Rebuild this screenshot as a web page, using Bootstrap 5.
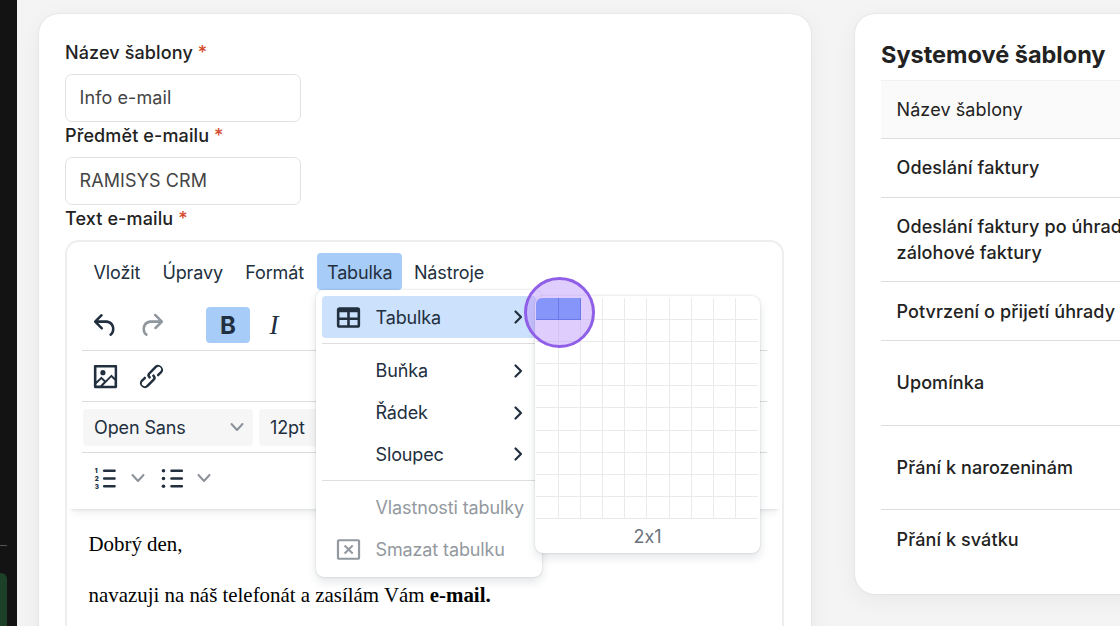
<!DOCTYPE html>
<html lang="cs">
<head>
    <meta charset="UTF-8">
    <meta name="viewport" content="width=device-width, initial-scale=1.0">
    <title>Šablony e-mailů - RAMISYS CRM</title>
    <link href="https://cdn.jsdelivr.net/npm/bootstrap@5.3.0/dist/css/bootstrap.min.css" rel="stylesheet">
    <style>
        body {
            font-family: Inter, "Liberation Sans", sans-serif;
            font-size: 18px;
            line-height: 27px;
            color: #222;
            background-color: #f4f4f4;
        }
        .page { height: 626px; }
        .sidebar { width: 17px; background-color: #131313; padding-top: 545px; }
        .sidebar-line { width: 7px; height: 1px; background-color: #555; }
        .sidebar-btn { width: 7px; height: 70px; margin-top: 27px; background-color: #1c4128; border-radius: 0 6px 6px 0; }
        .content { padding: 14px 0 0 22px; gap: 44px; }
        .panel {
            background-color: #fff;
            border-radius: 20px;
            padding: 25px 26px 26px;
            box-shadow: 0 0 2px rgba(0,0,0,.12), 0 6px 24px rgba(0,0,0,.05);
        }
        .panel-form { width: 772px; height: 700px; }
        .panel-list { width: 480px; height: 580px; }

        /* formulář */
        .form-label { font-weight: 500; margin-bottom: 8px; display: block; letter-spacing: .12px; }
        .form-label span { color: #d4492a; }
        .form-control {
            width: 236px;
            height: 48px;
            padding: 0 13.5px 1px;
            font-size: 18px;
            letter-spacing: .1px;
            color: #444;
            border: 1px solid #e2e2e2;
            border-radius: 7px;
        }

        /* editor */
        .editor {
            width: 719px;
            height: 500px;
            border: 2px solid #eee;
            border-radius: 14px;
            color: #222f3e;
            font-size: 18px;
            letter-spacing: -.12px;
        }
        .editor-head {
            height: 267px;
            padding: 11px 13px 0;
            margin: 0 2px;
            border-radius: 12px 12px 0 0;
            box-shadow: 0 3px 3px -2px rgba(34,47,62,.1), 0 8px 9px -4px rgba(34,47,62,.07);
        }
        .menu-bar { gap: .8px; padding-left: .8px; margin-bottom: 10px; }
        .menu-btn { height: 37px; border-radius: 4px; padding: 1px 10.7px 0; white-space: nowrap; }
        .menu-btn.on { margin-left: 1.6px; padding: 1px 9.9px 0; }
        .menu-btn.on, .tool.on { background-color: #a6ccf7; }
        .tool-row { height: 51px; border-bottom: 1px solid #dcdcdc; padding-left: 1px; }
        .tool { width: 44px; height: 36px; border-radius: 4px; margin-right: 2px; }
        .tool-b { font-size: 24px; font-weight: 700; margin-left: 31px; }
        .tool-i { font: italic 27px "Liberation Serif", serif; }
        .select-box { height: 37px; padding: 0 8px 0 11px; background-color: #f6f6f6; border-radius: 4px; }
        .select-font { width: 170px; }
        .select-size { width: 120px; margin-left: 6px; }
        .ico { width: 31px; height: 31px; fill: currentColor; flex: none; }
        .chev { width: 16px; height: 16px; fill: none; stroke: #8b9198; stroke-width: 2; stroke-linecap: round; stroke-linejoin: round; flex: none; }
        .list-tools .chev { margin-left: 2.5px; margin-top: -1px; }
        .list-tools .ico { margin-top: -1px; }
        .editor-text {
            font-family: "Liberation Serif", serif;
            font-size: 20.9px;
            letter-spacing: 0;
            line-height: 29px;
            color: #000;
            padding: 21px 21.5px 0;
        }
        .editor-text p { margin-bottom: 22px; white-space: nowrap; }

        /* rozbalené menu */
        .table-menu {
            top: 37px;
            left: 1px;
            width: 226px;
            height: 287px;
            padding: 6px;
            border: 0;
            border-radius: 8px;
            background-color: #fff;
            box-shadow: 0 0 2px rgba(34,47,62,.22), 0 5px 10px rgba(34,47,62,.12);
            z-index: 10;
        }
        .menu-row { height: 41.7px; padding: 0 8px 0 11px; border-radius: 4px; white-space: nowrap; }
        .menu-row.on { background-color: #cce1fb; height: 42px; }
        .menu-row.off { color: #9399a0; }
        .menu-row .ico, .menu-gap { width: 31px; margin-right: 11px; }
        .menu-row .chev { stroke: #222f3e; stroke-width: 2.2; margin-left: auto; margin-right: 2px; }
        .menu-line { height: 1px; background-color: #dedede; margin: 5px 0 6px; }
        .size-menu {
            top: 6px;
            left: 218.5px;
            width: 225px;
            height: 257px;
            padding: 2px 1.5px 0;
            border-radius: 8px;
            background-color: #fff;
            box-shadow: 0 0 2px rgba(34,47,62,.22), 0 5px 10px rgba(34,47,62,.12);
        }
        .size-grid { display: grid; grid-template-columns: repeat(10, 1fr); grid-auto-rows: 22.1px; overflow: hidden; border-radius: 6px 6px 0 0; }
        .size-grid i { border: solid #eaeaea; border-width: 0 1px 1px 0; }
        .size-grid i:nth-child(10n) { border-right: 0; }
        .size-grid i.on { background-color: #5c98f7; border-color: #2a62d6; }
        .size-label { height: 35px; color: #6a727b; font-feature-settings: "calt" 0; }
        .click-ring {
            top: -19px;
            left: -11px;
            width: 71px;
            height: 71px;
            border: 3px solid #8f5fe8;
            border-radius: 50%;
            background-color: rgba(185,145,250,.46);
        }

        /* seznam šablon */
        .panel-list h2 { font-size: 23.5px; font-weight: 700; line-height: 31px; margin: 0 0 10px; white-space: nowrap; }
        .tpl-row { height: 58.5px; padding: 1px 0 0 15.5px; border-bottom: 1px solid #dedede; font-weight: 500; line-height: 26px; letter-spacing: .1px; white-space: nowrap; }
        .tpl-head { height: 59px; background-color: #fafafa; border-top: 1px solid #f2f2f2; font-weight: 400; }
        .tpl-tall { height: 84.8px; }
        .tpl-row:last-child { border-bottom: 0; }
    </style>
</head>
<body class="overflow-hidden">
    <div class="page d-flex overflow-hidden">
        <div class="sidebar flex-shrink-0">
            <div class="sidebar-line"></div>
            <div class="sidebar-btn"></div>
        </div>

        <div class="content d-flex align-items-start">
            <div class="panel panel-form flex-shrink-0">
                <label class="form-label" for="nazev">Název šablony <span>*</span></label>
                <input type="text" class="form-control" id="nazev" value="Info e-mail">
                <label class="form-label" for="predmet">Předmět e-mailu <span>*</span></label>
                <input type="text" class="form-control" id="predmet" value="RAMISYS CRM">
                <label class="form-label">Text e-mailu <span>*</span></label>

                <div class="editor">
                    <div class="editor-head">
                        <div class="d-flex menu-bar">
                            <div class="menu-btn d-flex align-items-center">Vložit</div>
                            <div class="menu-btn d-flex align-items-center">Úpravy</div>
                            <div class="menu-btn d-flex align-items-center">Formát</div>
                            <div class="position-relative">
                                <div class="menu-btn on d-flex align-items-center">Tabulka</div>
                                <div class="table-menu position-absolute">
                                    <div class="menu-row on d-flex align-items-center">
                                        <svg class="ico" viewBox="0 0 24 24"><path d="M19 4a2 2 0 0 1 2 2v12a2 2 0 0 1-2 2H5a2 2 0 0 1-2-2V6c0-1.1.9-2 2-2h14ZM5 14v4h6v-4H5Zm14 0h-6v4h6v-4Zm0-6h-6v4h6V8ZM5 12h6V8H5v4Z"/></svg>
                                        Tabulka
                                        <svg class="chev" viewBox="0 0 16 16"><path d="M5.5 2.5 11 8l-5.5 5.5"/></svg>
                                    </div>
                                    <div class="menu-line"></div>
                                    <div class="menu-row d-flex align-items-center">
                                        <span class="menu-gap"></span>Buňka
                                        <svg class="chev" viewBox="0 0 16 16"><path d="M5.5 2.5 11 8l-5.5 5.5"/></svg>
                                    </div>
                                    <div class="menu-row d-flex align-items-center">
                                        <span class="menu-gap"></span>Řádek
                                        <svg class="chev" viewBox="0 0 16 16"><path d="M5.5 2.5 11 8l-5.5 5.5"/></svg>
                                    </div>
                                    <div class="menu-row d-flex align-items-center">
                                        <span class="menu-gap"></span>Sloupec
                                        <svg class="chev" viewBox="0 0 16 16"><path d="M5.5 2.5 11 8l-5.5 5.5"/></svg>
                                    </div>
                                    <div class="menu-line"></div>
                                    <div class="menu-row off d-flex align-items-center"><span class="menu-gap"></span>Vlastnosti tabulky</div>
                                    <div class="menu-row off d-flex align-items-center">
                                        <svg class="ico" viewBox="0 0 24 24"><path d="M19.5 4c.8 0 1.5.7 1.5 1.5v13c0 .8-.7 1.5-1.5 1.5h-15c-.8 0-1.5-.7-1.5-1.5v-13C3 4.7 3.7 4 4.5 4h15ZM19.3 5.7H4.7v12.6h14.6V5.7Zm-4.6 2.6 1.1 1.1-2.6 2.6 2.6 2.6-1.1 1.1-2.6-2.6-2.6 2.6-1.1-1.1 2.6-2.6-2.6-2.6 1.1-1.1 2.6 2.6 2.6-2.6Z"/></svg>
                                        Smazat tabulku
                                    </div>

                                    <div class="size-menu position-absolute">
                                        <div class="size-grid" id="sizeGrid"></div>
                                        <div class="size-label d-flex align-items-center justify-content-center">2x1</div>
                                        <div class="click-ring position-absolute"></div>
                                    </div>
                                </div>
                            </div>
                            <div class="menu-btn d-flex align-items-center">Nástroje</div>
                        </div>

                        <div class="tool-row d-flex align-items-center">
                            <div class="tool d-flex align-items-center justify-content-center">
                                <svg class="ico" viewBox="0 0 24 24"><path d="M6.4 8H12c3.7 0 6.2 2 6.8 5.1.6 2.7-.4 5.6-2.3 6.8a1 1 0 0 1-1-1.8c1.1-.6 1.8-2.7 1.4-4.6-.5-2.1-2.1-3.5-4.9-3.5H6.4l3.3 3.3a1 1 0 1 1-1.4 1.4l-5-5a1 1 0 0 1 0-1.4l5-5a1 1 0 0 1 1.4 1.4L6.4 8Z"/></svg>
                            </div>
                            <div class="tool d-flex align-items-center justify-content-center opacity-50">
                                <svg class="ico" viewBox="0 0 24 24"><path d="M17.6 10H12c-2.8 0-4.4 1.4-4.9 3.5-.4 2 .3 4 1.4 4.6a1 1 0 1 1-1 1.8c-2-1.2-2.9-4.1-2.3-6.8.6-3 3-5.1 6.8-5.1h5.6l-3.3-3.3a1 1 0 1 1 1.4-1.4l5 5a1 1 0 0 1 0 1.4l-5 5a1 1 0 0 1-1.4-1.4l3.3-3.3Z"/></svg>
                            </div>
                            <div class="tool tool-b on d-flex align-items-center justify-content-center">B</div>
                            <div class="tool tool-i d-flex align-items-center justify-content-center">I</div>
                        </div>
                        <div class="tool-row d-flex align-items-center">
                            <div class="tool d-flex align-items-center justify-content-center">
                                <svg class="ico" viewBox="0 0 24 24"><path fill-rule="evenodd" d="m5 15.7 3.3-3.2c.3-.3.7-.3 1 0L12 15l4.1-4c.3-.4.8-.4 1 0l2 1.9V5H5v10.7ZM5 18V19h3l2.8-2.9-2-2L5 17.9Zm14-3-2.5-2.4-6.4 6.5H19v-4ZM4 3h16c.6 0 1 .4 1 1v16c0 .6-.4 1-1 1H4a1 1 0 0 1-1-1V4c0-.6.4-1 1-1Zm6 8a2 2 0 1 0 0-4 2 2 0 0 0 0 4Z"/></svg>
                            </div>
                            <div class="tool d-flex align-items-center justify-content-center">
                                <svg class="ico" viewBox="0 0 24 24"><path d="M6.2 12.3a1 1 0 0 1 1.4 1.4l-2 2a2 2 0 1 0 2.6 2.8l4.8-4.8a1 1 0 0 0 0-1.4 1 1 0 1 1 1.4-1.3 2.9 2.9 0 0 1 0 4L9.6 20a3.9 3.9 0 0 1-5.5-5.5l2-2Zm11.6-.6a1 1 0 0 1-1.4-1.4l2-2a2 2 0 1 0-2.6-2.8L11 10.3a1 1 0 0 0 0 1.4A1 1 0 1 1 9.6 13a2.9 2.9 0 0 1 0-4L14.4 4a3.9 3.9 0 0 1 5.5 5.5l-2 2Z"/></svg>
                            </div>
                        </div>
                        <div class="tool-row d-flex align-items-center">
                            <div class="select-box select-font d-flex align-items-center justify-content-between">
                                Open Sans
                                <svg class="chev" viewBox="0 0 16 16"><path d="m2.5 5 5.5 6 5.5-6"/></svg>
                            </div>
                            <div class="select-box select-size d-flex align-items-center">12pt</div>
                        </div>
                        <div class="tool-row border-0 d-flex align-items-center list-tools">
                            <div class="tool d-flex align-items-center justify-content-center me-0">
                                <svg class="ico" viewBox="0 0 24 24">
                                    <path d="M11 6h8M11 12h8M11 18h8" stroke="currentColor" stroke-width="2" stroke-linecap="round"/>
                                    <text x="3.6" y="7.8" font-size="4.8" font-weight="900">1</text>
                                    <text x="3.6" y="13.8" font-size="4.8" font-weight="900">2</text>
                                    <text x="3.6" y="19.8" font-size="4.8" font-weight="900">3</text>
                                </svg>
                            </div>
                            <svg class="chev" viewBox="0 0 16 16"><path d="m2.5 5 5.5 6 5.5-6"/></svg>
                            <div class="tool d-flex align-items-center justify-content-center me-0 ms-1">
                                <svg class="ico" viewBox="0 0 24 24">
                                    <path d="M12 6h8M12 12h8M12 18h8" stroke="currentColor" stroke-width="2" stroke-linecap="round"/>
                                    <circle cx="5.8" cy="6" r="1.4"/><circle cx="5.8" cy="12" r="1.4"/><circle cx="5.8" cy="18" r="1.4"/>
                                </svg>
                            </div>
                            <svg class="chev" viewBox="0 0 16 16"><path d="m2.5 5 5.5 6 5.5-6"/></svg>
                        </div>
                    </div>

                    <div class="editor-text">
                        <p>Dobrý den,</p>
                        <p>navazuji na náš telefonát a zasílám Vám <strong>e-mail.</strong></p>
                    </div>
                </div>
            </div>

            <div class="panel panel-list flex-shrink-0">
                <h2>Systemové šablony</h2>
                <div class="tpl-row tpl-head d-flex align-items-center">Název šablony</div>
                <div class="tpl-row d-flex align-items-center">Odeslání faktury</div>
                <div class="tpl-row tpl-tall d-flex align-items-center">Odeslání faktury po úhradě<br>zálohové faktury</div>
                <div class="tpl-row d-flex align-items-center">Potvrzení o přijetí úhrady</div>
                <div class="tpl-row tpl-tall d-flex align-items-center">Upomínka</div>
                <div class="tpl-row tpl-tall d-flex align-items-center">Přání k narozeninám</div>
                <div class="tpl-row d-flex align-items-center">Přání k svátku</div>
            </div>
        </div>
    </div>

    <script src="https://cdn.jsdelivr.net/npm/bootstrap@5.3.0/dist/js/bootstrap.bundle.min.js"></script>
    <script>
        // Mřížka pro výběr velikosti tabulky 10x10
        const grid = document.getElementById('sizeGrid');
        for (let i = 0; i < 100; i++) {
            const cell = document.createElement('i');
            if (i < 2) cell.className = 'on';
            grid.appendChild(cell);
        }
    </script>
</body>
</html>
